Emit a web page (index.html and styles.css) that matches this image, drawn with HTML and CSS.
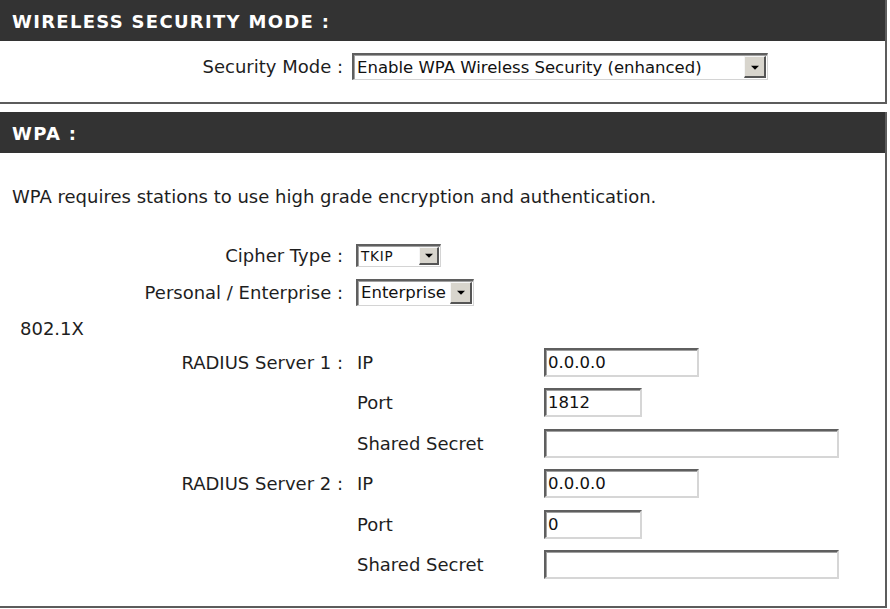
FILE: index.html
```html
<!DOCTYPE html>
<html lang="en">

<head>
    <meta charset="UTF-8">
    <title>Wireless Security</title>
    <link rel="stylesheet" href="styles.css">
</head>

<body>
    <!-- 安全模式 -->
    <div class="box">
        <h2 class="bar">WIRELESS SECURITY MODE :</h2>
        <div class="box-body mode-body">
            <div class="row">
                <span class="lbl">Security Mode :</span>
                <div class="select sel-mode"><span class="val">Enable WPA Wireless Security (enhanced)</span><span class="drop"></span></div>
            </div>
        </div>
    </div>

    <!-- WPA -->
    <div class="box wpa">
        <h2 class="bar">WPA :</h2>
        <div class="box-body wpa-body">
            <p class="intro">WPA requires stations to use high grade encryption and authentication.</p>

            <div class="row opt">
                <span class="lbl">Cipher Type :</span>
                <div class="select sel-cipher"><span class="val">TKIP</span><span class="drop"></span></div>
            </div>
            <div class="row opt">
                <span class="lbl">Personal / Enterprise :</span>
                <div class="select sel-ent"><span class="val">Enterprise</span><span class="drop"></span></div>
            </div>

            <div class="row sub-title">802.1X</div>

            <div class="row radius">
                <span class="lbl">RADIUS Server 1 :</span>
                <span class="sub">IP</span>
                <input class="txt ip" type="text" value="0.0.0.0">
            </div>
            <div class="row radius">
                <span class="lbl"></span>
                <span class="sub">Port</span>
                <input class="txt port" type="text" value="1812">
            </div>
            <div class="row radius">
                <span class="lbl"></span>
                <span class="sub">Shared Secret</span>
                <input class="txt secret" type="text" value="">
            </div>
            <div class="row radius">
                <span class="lbl">RADIUS Server 2 :</span>
                <span class="sub">IP</span>
                <input class="txt ip" type="text" value="0.0.0.0">
            </div>
            <div class="row radius">
                <span class="lbl"></span>
                <span class="sub">Port</span>
                <input class="txt port" type="text" value="0">
            </div>
            <div class="row radius">
                <span class="lbl"></span>
                <span class="sub">Shared Secret</span>
                <input class="txt secret" type="text" value="">
            </div>
        </div>
    </div>
</body>

</html>
```

FILE: styles.css
```css
* {
    margin: 0;
    padding: 0;
    box-sizing: border-box;
}

body {
    background: #fff;
    font-family: "DejaVu Sans", Verdana, sans-serif;
    font-size: 18px;
    color: #1e1e1e;
}

/* 外框 */
.box {
    width: 887px;
    border-right: 2px solid #5c5c5c;
    border-bottom: 2px solid #5c5c5c;
}

.wpa {
    margin-top: 8px;
}

/* 深色标题栏 */
.bar {
    height: 41px;
    line-height: 38px;
    padding-top: 3px;
    padding-left: 12px;
    background: #333;
    color: #fff;
    font-size: 18px;
    font-weight: bold;
    letter-spacing: 1.3px;
}

.mode-body {
    height: 61px;
    padding-top: 12px;
}

.wpa-body {
    height: 453px;
    padding-top: 34px;
}

.intro {
    height: 20px;
    line-height: 20px;
    padding-left: 12px;
    margin-bottom: 34px;
}

/* 每一行 */
.row {
    display: flex;
    align-items: center;
    height: 27px;
}

.opt {
    height: 28px;
    margin-bottom: 9px;
}

.sub-title {
    height: 26px;
    padding-left: 20px;
    margin-bottom: 1px;
}

.radius {
    height: 41px;
}

.radius:nth-child(2n+1) {
    height: 40px;
}

.lbl {
    width: 343px;
    text-align: right;
    margin-right: 13px;
    white-space: nowrap;
}

.mode-body .lbl {
    margin-right: 9px;
}

.sub {
    width: 188px;
    padding-left: 1px;
}

/* 下拉框 */
.select {
    display: flex;
    align-items: center;
    height: 27px;
    border-top: 2px solid #5f5f5f;
    border-left: 2px solid #5f5f5f;
    border-right: 1px solid #d4d4d4;
    border-bottom: 1px solid #d4d4d4;
    box-shadow: inset 1px 1px 0 #a0a0a0;
    background: #fff;
    font-size: 16.5px;
    color: #111;
}

.select .val {
    flex: 1;
    padding-left: 3px;
    white-space: nowrap;
}

.select .drop {
    position: relative;
    width: 22px;
    height: 22px;
    margin-right: 1px;
    background: #d8d5cd;
    border-top: 1px solid #f6f6f6;
    border-left: 1px solid #f6f6f6;
    border-right: 2px solid #555;
    border-bottom: 2px solid #555;
}

.select .drop::after {
    content: '';
    position: absolute;
    left: 50%;
    top: 50%;
    transform: translate(-50%, -30%);
    border-left: 4px solid transparent;
    border-right: 4px solid transparent;
    border-top: 4px solid #000;
}

.sel-mode {
    width: 416px;
}

.sel-cipher {
    width: 85px;
    height: 23px;
    font-size: 13.5px;
    letter-spacing: 0.8px;
}

.sel-cipher .drop {
    width: 20px;
    height: 18px;
}

.sel-ent {
    width: 118px;
}

/* 文本输入框 */
.txt {
    height: 29px;
    border-top: 2px solid #5f5f5f;
    border-left: 2px solid #5f5f5f;
    border-right: 2px solid #d6d6d6;
    border-bottom: 2px solid #d6d6d6;
    box-shadow: inset 1px 1px 0 #a0a0a0;
    padding-left: 2px;
    font-family: "DejaVu Sans", Verdana, sans-serif;
    font-size: 16.5px;
    color: #111;
    outline: none;
}

.ip {
    width: 155px;
}

.port {
    width: 98px;
}

.secret {
    width: 295px;
}
```
